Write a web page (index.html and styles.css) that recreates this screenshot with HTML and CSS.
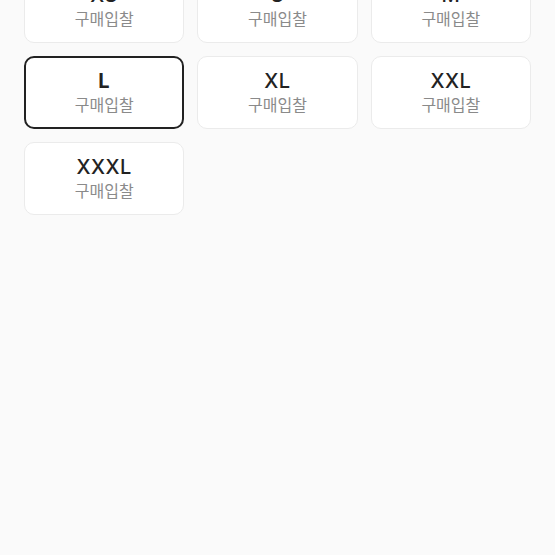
FILE: index.html
```html
<!DOCTYPE html>
<html>
<head lang="ko">
    <meta charset="UTF-8">
    <title></title>
    <link rel="stylesheet" href="styles.css">
</head>
<body>
<ul class="size-list">
    <li><strong>XS</strong><span>구매입찰</span></li>
    <li><strong>S</strong><span>구매입찰</span></li>
    <li><strong>M</strong><span>구매입찰</span></li>
    <li class="current"><strong>L</strong><span>구매입찰</span></li>
    <li><strong>XL</strong><span>구매입찰</span></li>
    <li><strong>XXL</strong><span>구매입찰</span></li>
    <li><strong>XXXL</strong><span>구매입찰</span></li>
</ul>
</body>
</html>
```

FILE: styles.css
```css
* {
    margin: 0;
    padding: 0;
    list-style: none;
    box-sizing: border-box;
}

body {
    background: #fafafa;
    font-family: "Noto Sans", "Noto Sans CJK KR", sans-serif;
    height: 555px;
    overflow: hidden;
}

.size-list {
    display: grid;
    grid-template-columns: repeat(3, 1fr);
    gap: 13px;
    padding: 0 24px;
    margin-top: -30px;
}

.size-list li {
    height: 73px;
    background: #fff;
    border: 1px solid #ebebeb;
    border-radius: 10px;
    display: flex;
    flex-direction: column;
    align-items: center;
    justify-content: center;
    cursor: pointer;
}

.size-list li strong {
    font-family: Inter, "Noto Sans", sans-serif;
    font-size: 20px;
    font-weight: 500;
    color: #222;
    line-height: 24px;
    letter-spacing: 0.5px;
}

.size-list li span {
    font-size: 16px;
    font-weight: 400;
    color: #8a8a8a;
    line-height: 22px;
    margin-top: 1px;
}

.size-list li.current {
    border: 2px solid #222;
}

.size-list li.current strong {
    font-weight: 700;
}
```
